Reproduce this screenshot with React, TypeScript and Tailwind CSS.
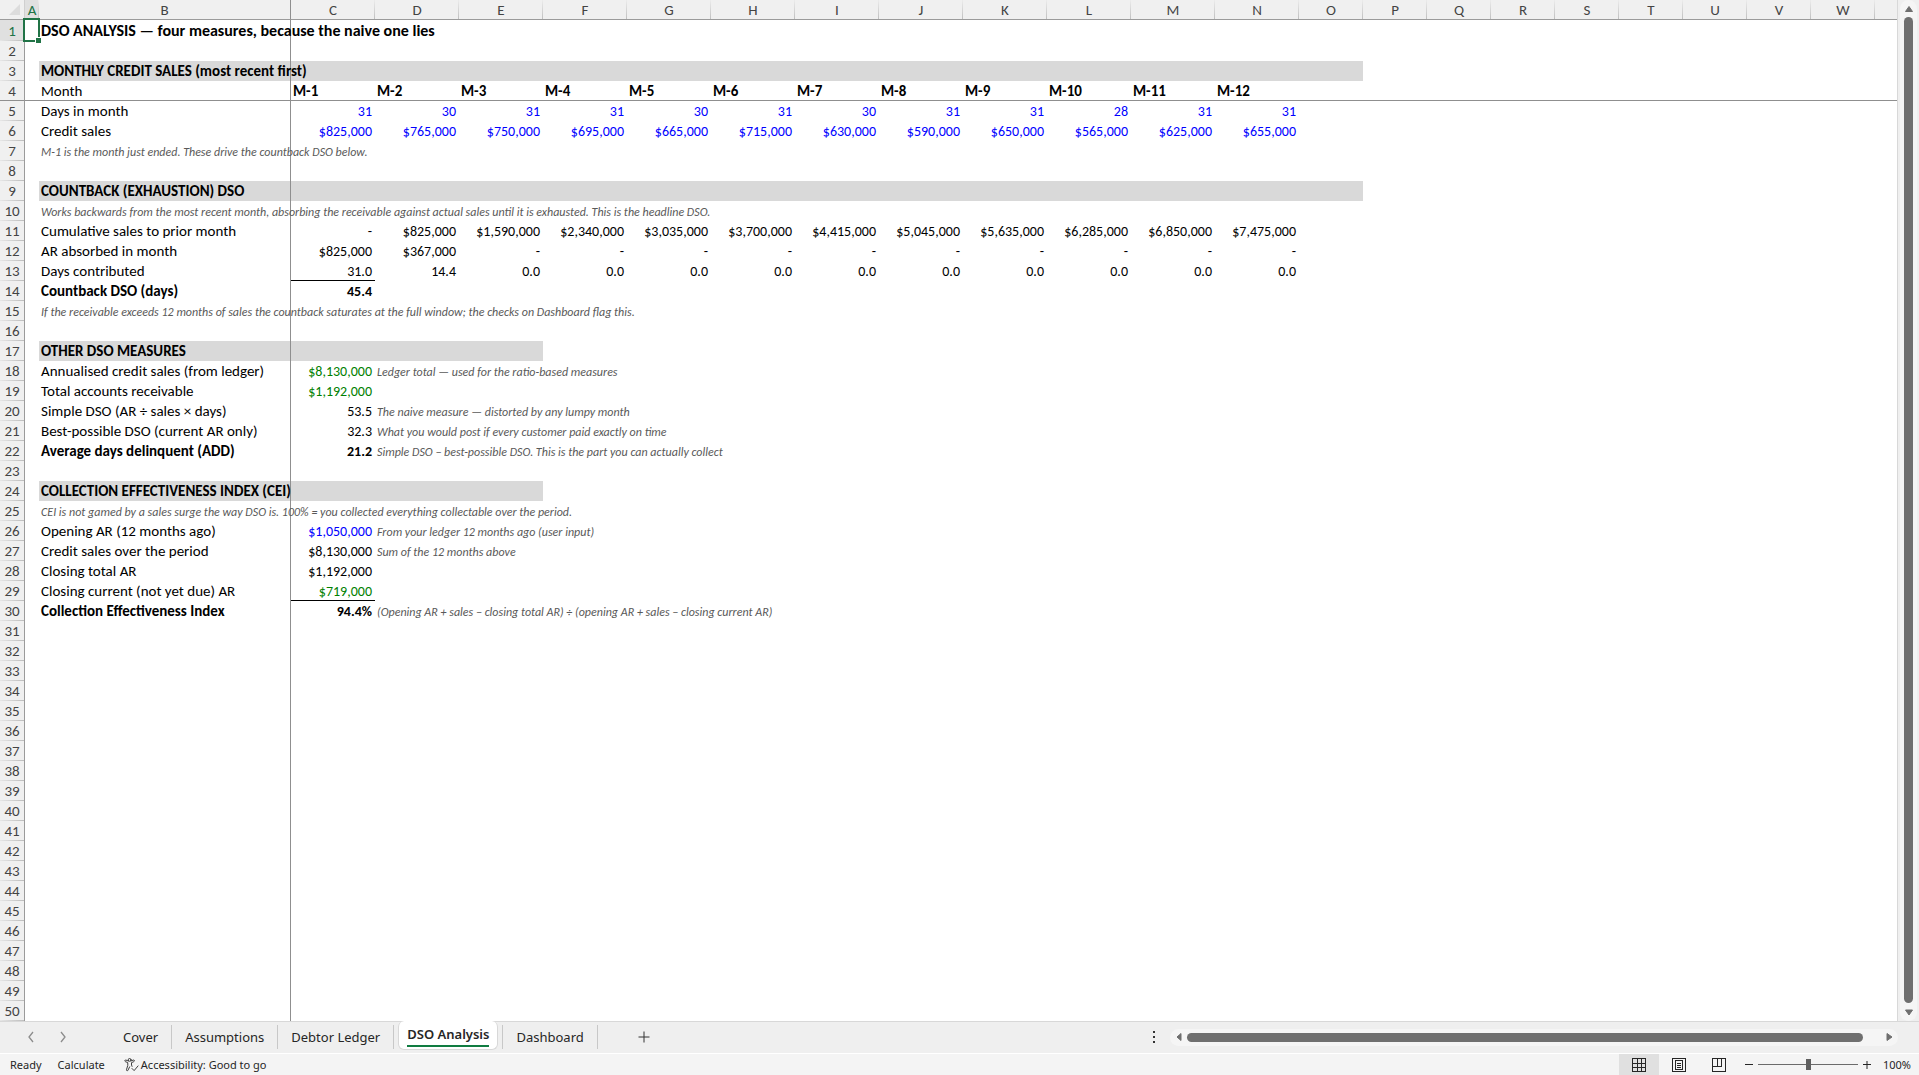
import type { ReactNode } from "react";

type Tone = "black" | "blue" | "green";
type Cell = { v: string; tone?: Tone; bold?: boolean; note?: boolean; left?: boolean; rule?: boolean };
type Row = {
  label?: string;
  kind?: "title" | "section" | "bold" | "note";
  fillTo?: number;
  cells?: Cell[];
};

const LETTERS = "ABCDEFGHIJKLMNOPQRSTUVW".split("");
const ROW_COUNT = 50;

const num = (values: string[], tone: Tone = "black"): Cell[] => values.map((v) => ({ v, tone }));
const note = (v: string): Cell => ({ v, note: true });

const ROWS: Record<number, Row> = {
  1: { label: "DSO ANALYSIS — four measures, because the naive one lies", kind: "title" },
  3: { label: "MONTHLY CREDIT SALES (most recent first)", kind: "section", fillTo: 14 },
  4: {
    label: "Month",
    cells: Array.from({ length: 12 }, (_, i) => ({ v: `M-${i + 1}`, bold: true, left: true })),
  },
  5: {
    label: "Days in month",
    cells: num(["31", "30", "31", "31", "30", "31", "30", "31", "31", "28", "31", "31"], "blue"),
  },
  6: {
    label: "Credit sales",
    cells: num(
      ["$825,000", "$765,000", "$750,000", "$695,000", "$665,000", "$715,000", "$630,000", "$590,000", "$650,000", "$565,000", "$625,000", "$655,000"],
      "blue",
    ),
  },
  7: { label: "M-1 is the month just ended. These drive the countback DSO below.", kind: "note" },
  9: { label: "COUNTBACK (EXHAUSTION) DSO", kind: "section", fillTo: 14 },
  10: {
    label:
      "Works backwards from the most recent month, absorbing the receivable against actual sales until it is exhausted. This is the headline DSO.",
    kind: "note",
  },
  11: {
    label: "Cumulative sales to prior month",
    cells: num(["-", "$825,000", "$1,590,000", "$2,340,000", "$3,035,000", "$3,700,000", "$4,415,000", "$5,045,000", "$5,635,000", "$6,285,000", "$6,850,000", "$7,475,000"]),
  },
  12: {
    label: "AR absorbed in month",
    cells: num(["$825,000", "$367,000", "-", "-", "-", "-", "-", "-", "-", "-", "-", "-"]),
  },
  13: {
    label: "Days contributed",
    cells: [{ v: "31.0", rule: true }, ...num(["14.4", "0.0", "0.0", "0.0", "0.0", "0.0", "0.0", "0.0", "0.0", "0.0", "0.0"])],
  },
  14: { label: "Countback DSO (days)", kind: "bold", cells: [{ v: "45.4", bold: true }] },
  15: {
    label: "If the receivable exceeds 12 months of sales the countback saturates at the full window; the checks on Dashboard flag this.",
    kind: "note",
  },
  17: { label: "OTHER DSO MEASURES", kind: "section", fillTo: 4 },
  18: {
    label: "Annualised credit sales (from ledger)",
    cells: [{ v: "$8,130,000", tone: "green" }, note("Ledger total — used for the ratio-based measures")],
  },
  19: { label: "Total accounts receivable", cells: [{ v: "$1,192,000", tone: "green" }] },
  20: {
    label: "Simple DSO (AR ÷ sales × days)",
    cells: [{ v: "53.5" }, note("The naive measure — distorted by any lumpy month")],
  },
  21: {
    label: "Best-possible DSO (current AR only)",
    cells: [{ v: "32.3" }, note("What you would post if every customer paid exactly on time")],
  },
  22: {
    label: "Average days delinquent (ADD)",
    kind: "bold",
    cells: [{ v: "21.2", bold: true }, note("Simple DSO − best-possible DSO. This is the part you can actually collect")],
  },
  24: { label: "COLLECTION EFFECTIVENESS INDEX (CEI)", kind: "section", fillTo: 4 },
  25: {
    label: "CEI is not gamed by a sales surge the way DSO is. 100% = you collected everything collectable over the period.",
    kind: "note",
  },
  26: {
    label: "Opening AR (12 months ago)",
    cells: [{ v: "$1,050,000", tone: "blue" }, note("From your ledger 12 months ago (user input)")],
  },
  27: { label: "Credit sales over the period", cells: [{ v: "$8,130,000" }, note("Sum of the 12 months above")] },
  28: { label: "Closing total AR", cells: [{ v: "$1,192,000" }] },
  29: { label: "Closing current (not yet due) AR", cells: [{ v: "$719,000", tone: "green", rule: true }] },
  30: {
    label: "Collection Effectiveness Index",
    kind: "bold",
    cells: [
      { v: "94.4%", bold: true },
      note("(Opening AR + sales − closing total AR) ÷ (opening AR + sales − closing current AR)"),
    ],
  },
};

const TONES: Record<Tone, string> = { black: "text-black", blue: "text-[#0000ff]", green: "text-[#008000]" };

const KINDS = {
  title: "text-[16px] font-bold",
  section: "text-[15px] font-bold",
  bold: "text-[15px] font-bold",
  note: "text-[12px] italic text-[#595959]",
};

function cellClass(c: Cell) {
  if (c.note) return "text-left text-[12px] italic text-[#595959]";
  const size = c.left ? "text-left text-[15px]" : "text-right text-[14px]";
  return `${size} ${TONES[c.tone ?? "black"]} ${c.bold ? "font-bold" : ""}`;
}

function SheetRow({ n }: { n: number }) {
  const row = ROWS[n] ?? {};
  const frozen = n === 4 ? "border-b border-b-[#8f8f8f]" : "";
  const filled = (col: number) => (row.fillTo && col <= row.fillTo ? "bg-[#d9d9d9]" : "");
  const active = n === 1;
  const top = active ? "pt-0.5" : "pt-px";
  return (
    <tr className={active ? "h-[21px]" : "h-5"}>
      <th
        scope="row"
        className={`border-r border-[#9b9b9b] bg-[length:100%_1px] bg-bottom bg-no-repeat p-0 text-center align-baseline text-[15px] font-normal leading-[18px] ${top} ${
          n === 4 ? "border-b border-b-[#8f8f8f]" : "bg-[linear-gradient(to_right,#e6e6e6,#bdbdbd)]"
        } ${active ? "bg-[#e0e0e0] text-[#217346]" : "bg-[#f0f0f0] text-[#444444]"}`}
      >
        {n}
      </th>
      <td className={`relative p-0 ${frozen}`}>
        {active && (
          <span className="absolute -left-0.5 -top-0.5 h-6 w-[17px] border-2 border-[#217346]">
            <span className="absolute -bottom-1 -right-1 size-[7px] border border-white bg-[#217346]" />
          </span>
        )}
      </td>
      <td
        className={`whitespace-nowrap border-r border-r-[#8f8f8f] p-0 pl-0.5 align-baseline leading-[18px] ${top} ${frozen} ${filled(1)} ${
          row.kind ? KINDS[row.kind] : "text-[15px]"
        }`}
      >
        {row.label}
      </td>
      {Array.from({ length: 21 }, (_, i) => {
        const c = row.cells?.[i];
        return (
          <td
            key={i}
            className={`whitespace-nowrap p-0 pl-0.5 pr-[3px] align-baseline leading-4 ${frozen} ${filled(i + 2)} ${
              c ? cellClass(c) : ""
            } ${c?.rule ? "border-b border-b-black" : ""}`}
          >
            {c?.v}
          </td>
        );
      })}
      <td className={`p-0 ${frozen}`} />
    </tr>
  );
}

function Sheet() {
  return (
    <table className="w-full table-fixed border-separate border-spacing-0 font-['Carlito','Lato',sans-serif] text-black">
      <colgroup>
        <col className="w-[25px]" />
        <col className="w-[14px]" />
        <col className="w-[252px]" />
        {LETTERS.slice(2, 14).map((l) => (
          <col key={l} className="w-[84px]" />
        ))}
        {LETTERS.slice(14).map((l) => (
          <col key={l} className="w-16" />
        ))}
        <col />
      </colgroup>
      <thead>
        <tr className="h-5">
          <th className="border-b border-r border-b-[#9b9b9b] border-r-[#d0d0d0] bg-[#f0f0f0] p-0">
            <svg viewBox="0 0 11 11" className="ml-auto mr-1 size-[11px] fill-[#dcdcdc]" aria-hidden="true">
              <path d="M11 0V11H0Z" />
            </svg>
          </th>
          {LETTERS.map((l) => (
            <th
              key={l}
              scope="col"
              className={`border-b border-[#9b9b9b] bg-[length:1px_100%] bg-right bg-no-repeat p-0 pt-px text-center text-[15px] font-normal leading-[18px] ${
                l === "B" ? "border-r border-r-[#8f8f8f]" : "bg-[linear-gradient(to_bottom,#ececec,#c0c0c0)]"
              } ${l === "A" ? "bg-[#e0e0e0] text-[#217346]" : "bg-[#f0f0f0] text-[#444444]"}`}
            >
              {l}
            </th>
          ))}
          <th className="border-b border-[#9b9b9b] bg-[#f0f0f0] p-0" />
        </tr>
      </thead>
      <tbody>
        {Array.from({ length: ROW_COUNT }, (_, i) => (
          <SheetRow key={i} n={i + 1} />
        ))}
      </tbody>
    </table>
  );
}

function Arrow({ label, d, className }: { label: string; d: string; className: string }) {
  return (
    <button type="button" aria-label={label} className={`flex shrink-0 items-center justify-center ${className}`}>
      <svg viewBox="0 0 10 10" className="size-2.5 fill-[#6f6f6f] stroke-[#6f6f6f]" strokeLinejoin="round" aria-hidden="true">
        <path d={d} />
      </svg>
    </button>
  );
}

function Tab({ children }: { children: ReactNode }) {
  return (
    <button type="button" role="tab" aria-selected="false" className="h-6 border-r border-[#c8c8c8] px-[13px] leading-6">
      {children}
    </button>
  );
}

function SheetTabs() {
  return (
    <div className="flex h-8 shrink-0 items-start border-t border-[#d8d8d8] bg-[#efefef] text-[13px] text-[#262626]">
      <div className="flex h-[30px] w-[110px] items-center gap-5 pl-[25px]">
        {["M8 2 4 7l4 5", "m4 2 4 5-4 5"].map((d, i) => (
          <button key={d} type="button" aria-label={i ? "Next sheet" : "Previous sheet"}>
            <svg viewBox="0 0 12 14" className="h-3.5 w-3 fill-none stroke-[#8c8c8c]" strokeWidth="1.3" aria-hidden="true">
              <path d={d} />
            </svg>
          </button>
        ))}
      </div>
      <div role="tablist" className="flex items-start">
        <div className="flex pt-[3px]">
          <Tab>Cover</Tab>
          <Tab>Assumptions</Tab>
          <Tab>Debtor Ledger</Tab>
        </div>
        <button
          type="button"
          role="tab"
          aria-selected="true"
          className="-mt-px ml-1 h-[29px] rounded-md border border-t-0 border-[#d8d8d8] bg-white px-2 font-semibold"
        >
          <span className="block h-6 border-b-2 border-[#107c41] leading-[22px]">DSO Analysis</span>
        </button>
        <div className="ml-1 flex pt-[3px]">
          <span className="h-6 w-px bg-[#c8c8c8]" />
          <Tab>Dashboard</Tab>
        </div>
      </div>
      <button type="button" aria-label="New sheet" className="ml-10 flex h-[30px] items-center">
        <svg viewBox="0 0 12 12" className="size-3 fill-none stroke-[#333333]" aria-hidden="true">
          <path d="M6 .5v11M.5 6h11" />
        </svg>
      </button>
      <div className="flex-1" />
      <div className="flex h-[30px] w-[40%] items-center pl-0.5 pr-[21px]">
        <span className="mr-[13px] flex w-1 flex-col gap-[3px]">
          <i className="size-0.5 bg-[#333333]" />
          <i className="size-0.5 bg-[#333333]" />
          <i className="size-0.5 bg-[#333333]" />
        </span>
        <div className="flex h-[17px] flex-1 items-center rounded-full bg-[#f5f5f5]">
          <Arrow label="Scroll left" className="h-4 w-[17px]" d="M7 1.500v7L3 5Z" />
          <div className="h-[9px] flex-1 rounded-full bg-[#6f6f6f]" />
          <Arrow label="Scroll right" className="ml-[17px] h-4 w-[18px]" d="M3 1.500v7L8 5Z" />
        </div>
      </div>
    </div>
  );
}

function ViewButton({ label, d, on }: { label: string; d: string; on?: boolean }) {
  return (
    <button
      type="button"
      aria-label={label}
      aria-pressed={!!on}
      className={`flex h-full w-10 items-center justify-center ${on ? "bg-[#e0e0e0]" : ""}`}
    >
      <svg viewBox="0 0 14 14" className="h-[14px] w-[14px] fill-none stroke-[#262626]" shapeRendering="crispEdges" aria-hidden="true">
        <path d={d} />
      </svg>
    </button>
  );
}

function StatusBar() {
  return (
    <footer className="flex shrink-0 items-center border-t border-white bg-[#f4f4f4] text-[11px] leading-[21px] text-[#262626]">
      <span className="pl-2.5">Ready</span>
      <button type="button" className="ml-4">
        Calculate
      </button>
      <button type="button" className="ml-[19px] flex items-center">
        <svg viewBox="0 0 16 15" className="mr-0.5 h-[14px] w-[15px] fill-none stroke-[#333333]" strokeLinecap="round" strokeLinejoin="round" aria-hidden="true">
          <circle cx="6" cy="2" r="1.500" />
          <path d="M4.600 3.200 2 2.200C.8 1.900.4 3.400 1.500 3.900L4 5v3l-1.400 4.500c-.2 1.300 1.300 1.600 1.700.5L6 9.500M7.400 3.200 10 2.200c1.200-.3 1.600 1.200.5 1.700L8 5v2.500l.6 1.500" />
          <path d="m8.500 11.200 2.300 2.300 4.200-5" />
        </svg>
        Accessibility: Good to go
      </button>
      <div className="flex-1" />
      <div className="flex h-[21px]">
        <ViewButton label="Normal view" on d="M.5 .5h13v13H.5ZM5 .5v13M9 .5v13M.5 5h13M.5 9h13" />
        <ViewButton label="Page layout view" d="M.5 .5h13v13H.5ZM3.500 2.500h7v9h-7ZM5 5h4M5 7h4M5 9h4" />
        <ViewButton label="Page break preview" d="M.5 .5h13v13H.5ZM.5 8.500h9v-8M5 .5v8" />
      </div>
      <button type="button" aria-label="Zoom out" className="ml-1.5">
        <svg viewBox="0 0 8 8" className="size-2 fill-none stroke-[#262626]" aria-hidden="true">
          <path d="M0 3.500h8" />
        </svg>
      </button>
      <input
        type="range"
        aria-label="Zoom"
        min={0}
        max={100}
        defaultValue={51}
        className="mx-[5px] h-[11px] w-[100px] appearance-none bg-[linear-gradient(#6b6b6b,#6b6b6b)] bg-[length:100%_1px] bg-center bg-no-repeat [&::-webkit-slider-thumb]:h-[11px] [&::-webkit-slider-thumb]:w-[5px] [&::-webkit-slider-thumb]:appearance-none [&::-webkit-slider-thumb]:bg-[#5f5f5f]"
      />
      <button type="button" aria-label="Zoom in">
        <svg viewBox="0 0 8 8" className="size-2 fill-none stroke-[#262626]" aria-hidden="true">
          <path d="M0 3.500h8M4 0v8" />
        </svg>
      </button>
      <span className="w-[48px] pr-2 text-right">100%</span>
    </footer>
  );
}

export default function App() {
  return (
    <div className="flex h-screen flex-col overflow-hidden bg-[#efefef] font-['Noto_Sans',sans-serif]">
      <main className="flex min-h-0 flex-1">
        <div className="min-w-0 flex-1 overflow-hidden border-r border-[#d8d8d8] bg-white">
          <Sheet />
        </div>
        <div className="flex w-[21px] shrink-0 flex-col items-center px-0.5">
          <div className="flex w-[17px] flex-1 flex-col items-center rounded-full bg-[#f5f5f5]">
            <Arrow label="Scroll up" className="h-[17px] w-4" d="M1.500 7.500h7L5 2.500Z" />
            <div className="w-[9px] flex-1 rounded-full bg-[#6f6f6f]" />
            <Arrow label="Scroll down" className="h-[18px] w-4" d="M1.500 3h7L5 8Z" />
          </div>
        </div>
      </main>
      <SheetTabs />
      <StatusBar />
    </div>
  );
}
